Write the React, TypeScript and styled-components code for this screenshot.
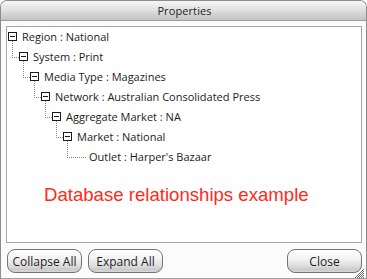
import React from "react";
import styled, { createGlobalStyle } from "styled-components";

const Global = createGlobalStyle`
  html, body { margin: 0; padding: 0; background: #ffffff; }
  body { font-family: "Open Sans", "DejaVu Sans", sans-serif; }
  * { box-sizing: border-box; }
`;

const Window = styled.div`
  position: relative;
  width: 367px;
  height: 279px;
  display: flex;
  flex-direction: column;
  background: #fbfbfb;
  border: 1px solid #8c8c8c;
  border-bottom-color: #a0a0a0;
  border-radius: 7px 7px 0 0;
  overflow: hidden;
`;

const TitleBar = styled.div`
  height: 20px;
  flex: none;
  display: flex;
  align-items: center;
  justify-content: center;
  background: linear-gradient(to bottom, #f6f6f6 0%, #e2e2e2 45%, #cdcdcd 80%, #c4c4c4 100%);
  border-bottom: 1px solid #9a9a9a;
  font-size: 11px;
  color: #1e1e1e;
  letter-spacing: 0.1px;
  padding-left: 2px;
`;

const Body = styled.div`
  flex: 1;
  display: flex;
  flex-direction: column;
  padding: 5px 4px 0 5px;
`;

const Panel = styled.div`
  height: 217px;
  flex: none;
  background: #ffffff;
  border: 1px solid #a6a6a6;
  display: flex;
  flex-direction: column;
`;

const Row = styled.div<{ $level: number }>`
  height: 20px;
  display: flex;
  align-items: center;
  padding-left: ${(p) => (p.$level === 0 ? 1 : 11 * p.$level - 6)}px;
  font-size: 11px;
  color: #1c1c1c;
  white-space: nowrap;
`;

const Connector = styled.span<{ $leaf?: boolean }>`
  align-self: flex-start;
  flex: none;
  margin-top: -6px;
  height: 17px;
  width: ${(p) => (p.$leaf ? 19 : 7)}px;
  border-left: 1px dotted #8a8a8a;
  border-bottom: 1px dotted #8a8a8a;
`;

const ToggleBox = styled.span`
  position: relative;
  flex: none;
  width: 9px;
  height: 9px;
  margin-top: -1px;
  border: 1px solid #1a1a1a;
  background: #ffffff;
  &::after {
    content: "";
    position: absolute;
    left: 1px;
    right: 1px;
    top: 3px;
    height: 1px;
    background: #1a1a1a;
  }
`;

const Label = styled.span<{ $leaf?: boolean }>`
  margin-left: ${(p) => (p.$leaf ? 3 : 5)}px;
  line-height: 20px;
`;

const Caption = styled.div`
  margin-top: 17px;
  padding-left: 37px;
  font-family: "Liberation Sans", Arial, sans-serif;
  font-size: 18.6px;
  color: #ff2a1a;
  white-space: nowrap;
`;

const ButtonBar = styled.div`
  margin-top: 6px;
  display: flex;
  align-items: center;
  gap: 6px;
  padding-left: 1px;
`;

const Button = styled.button<{ $push?: boolean }>`
  height: 24px;
  width: 75px;
  padding: 0;
  margin-left: ${(p) => (p.$push ? "auto" : "0")};
  border: 1px solid #747474;
  border-radius: 8px;
  background: linear-gradient(to bottom, #ffffff 0%, #f3f3f3 40%, #dedede 70%, #cacaca 90%, #d8d8d8 100%);
  box-shadow: inset 0 1px 0 #ffffff;
  font-family: "Open Sans", "DejaVu Sans", sans-serif;
  font-size: 12px;
  color: #1e1e1e;
  cursor: pointer;
`;

const Grip = styled.svg`
  position: absolute;
  right: 2px;
  bottom: 0px;
`;

type Node = { label: string; leaf?: boolean };

const nodes: Node[] = [
  { label: "Region : National" },
  { label: "System : Print" },
  { label: "Media Type : Magazines" },
  { label: "Network : Australian Consolidated Press" },
  { label: "Aggregate Market : NA" },
  { label: "Market : National" },
  { label: "Outlet : Harper's Bazaar", leaf: true },
];

function GripIcon() {
  const dots: React.ReactNode[] = [];
  for (let y = 0; y < 9; y++) {
    for (let x = 0; x < 9; x++) {
      if (x + y >= 8 && (x + y) % 2 === 0) {
        dots.push(<rect key={`${x}-${y}`} x={x} y={y} width={1} height={1} fill="#6e6e6e" />);
      }
    }
  }
  return (
    <Grip width={9} height={9} viewBox="0 0 9 9">
      {dots}
    </Grip>
  );
}

export default function App() {
  return (
    <>
      <Global />
      <Window>
        <TitleBar>Properties</TitleBar>
        <Body>
          <Panel>
            {nodes.map((n, i) => (
              <Row key={n.label} $level={i}>
                {i > 0 && <Connector $leaf={n.leaf} />}
                {!n.leaf && <ToggleBox />}
                <Label $leaf={n.leaf}>{n.label}</Label>
              </Row>
            ))}
            <Caption>Database relationships example</Caption>
          </Panel>
          <ButtonBar>
            <Button>Collapse All</Button>
            <Button>Expand All</Button>
            <Button $push>Close</Button>
          </ButtonBar>
        </Body>
        <GripIcon />
      </Window>
    </>
  );
}
